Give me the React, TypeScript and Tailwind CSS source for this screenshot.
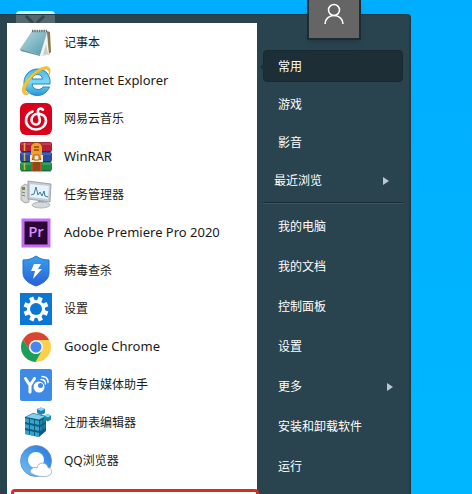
import type { ReactNode } from "react";

const NotepadIcon = () => (
  <svg viewBox="0 0 32 32" className="size-8">
    <defs>
      <linearGradient id="note" x1="0" y1="0" x2="1" y2="1">
        <stop offset="0" stopColor="#b5dbe2" />
        <stop offset="0.5" stopColor="#86bac7" />
        <stop offset="1" stopColor="#4f98aa" />
      </linearGradient>
    </defs>
    <path d="M27 4l3 1 1 20-3 3-4-1z" fill="#8a7650" />
    <path d="M12 4l15-1 1 25-7 1z" fill="#d5dad6" />
    <path d="M12 4l15 1-7 23L0 22z" fill="url(#note)" />
    <path d="M0 22l20 6v1L1 24z" fill="#5d8e9b" />
    <path d="M27 7l2 20-9 2z" fill="#f1f3f0" />
    <path d="M26 17l-3 11 5-1z" fill="#c9cec6" />
    <path d="M12 4h15" stroke="#6a7778" strokeWidth="2.500" strokeDasharray="1.500 .8" />
  </svg>
);

const ExplorerIcon = () => (
  <svg viewBox="0 0 32 32" className="size-8">
    <defs>
      <linearGradient id="ie" x1="0" y1="0" x2="0" y2="1">
        <stop offset="0" stopColor="#4fb4e6" />
        <stop offset="0.5" stopColor="#7bd8f8" />
        <stop offset="1" stopColor="#2497d8" />
      </linearGradient>
    </defs>
    <path
      d="M30 19H12c.3 3.500 3 5.500 6 5.500 2.500 0 4-1 5-2.500h6.500C27.500 27 23 30.500 17.500 30.500 10 30.500 4 25 4 17.500S10 4 17.500 4 31 9.500 30 19zM12 14h10.500c-.5-3-2.500-4.500-5-4.500S12.500 11 12 14z"
      fill="url(#ie)"
      stroke="#2386bf"
      strokeWidth="1"
    />
    <path
      d="M29 10c1.500-4 1.500-7-1-8-4-1.500-12 3-18 9C4 17 1 24 3 28c1 2 4 2 7 0-3 .5-4.500-.5-4.500-3 .2-4 3-9 7.500-13.500C18 6.500 24 3.500 27 4c2 .5 2.500 3 2 6z"
      fill="#f5c62c"
      stroke="#e6b32a"
      strokeWidth=".8"
    />
  </svg>
);

const MusicIcon = () => (
  <svg viewBox="0 0 32 32" className="size-8">
    <rect width="32" height="32" rx="6" fill="#d9001b" />
    <path
      d="M12.500 8.500C8.500 10 6 13.500 6 17.500 6 22.500 10.500 26.500 16 26.500s10-4 10-9c0-4-3.500-6.800-8-6.800-4 0-6.500 3-6.500 6 0 2.800 2 4.800 4.500 4.800s4.200-2 3.800-4.600L18 9c-.6-3 2.500-4.500 5-2.300"
      fill="none"
      stroke="#fff"
      strokeWidth="2.600"
      strokeLinecap="round"
    />
  </svg>
);

const WinRarIcon = () => (
  <svg viewBox="0 0 32 32" className="size-8">
    <rect y="1" width="32" height="10" rx="2" fill="#b01f3a" />
    <rect y="11" width="32" height="10" rx="2" fill="#2b4aa5" />
    <rect y="21" width="32" height="9" rx="2" fill="#1f8a42" />
    <path d="M1 3h30" stroke="#d5566b" />
    <path d="M1 13h30" stroke="#5678cf" />
    <path d="M1 23h30" stroke="#4fb86d" />
    <path d="M1 10.500h30M1 20.500h30M1 30h30" stroke="#1d2236" strokeOpacity=".7" />
    <path d="M4.500 2v8M4.500 12v8M4.500 22v7" stroke="#d9b03a" strokeWidth="1.500" />
    <rect x="11" y="1" width="11" height="29" fill="#96451c" />
    <path d="M12 21v9M21 21v9" stroke="#c66a2a" />
    <path d="M11 13V7c0-3 2-5 5.500-5S22 4 22 7v6l-2 6h-7z" fill="#f0a02c" />
    <path d="M11 14v6h11v-6" fill="none" stroke="#f4ead2" strokeWidth="2" />
    <path d="M14 6h5M14 9h5" stroke="#8b4a17" strokeWidth="1.500" />
    <path d="M14 14h5v5h-5z" fill="#fff1cf" stroke="#a95b16" />
  </svg>
);

const TaskIcon = () => (
  <svg viewBox="0 0 32 32" className="size-8">
    <path d="M1 8l4-3 4 2v16l-4 1-4-3z" fill="#d6d7d3" stroke="#999b98" strokeWidth=".8" />
    <path d="M2 13l3 1M2 16l3 1" stroke="#777b80" />
    <path d="M2 8h3v3H2z" fill="#74864a" />
    <path d="M8 2l23 3-1 18-22-3z" fill="#c7cccf" stroke="#8e969c" strokeWidth=".8" />
    <path d="M10 5l19 2-1 13-18-2z" fill="#e6f3fd" />
    <path d="M11 16l3-1 2-7 2 8 2-3 2 4 2-5 1 5 3 1" fill="none" stroke="#3678a8" />
    <path d="M18 22h6l1 4h-7z" fill="#999fa4" />
    <ellipse cx="21" cy="26" rx="9" ry="3" fill="#d6d9dc" stroke="#a4a9ad" strokeWidth=".8" />
  </svg>
);

const PremiereIcon = () => (
  <svg viewBox="0 0 32 32" className="size-8">
    <rect x="3" y="3" width="26" height="26" fill="#2a0636" stroke="#c46cf0" strokeWidth="3" />
    <text x="16" y="20" textAnchor="middle" fontSize="15" fontWeight="600" fontFamily="Open Sans, sans-serif" fill="#d88cff">
      Pr
    </text>
  </svg>
);

const ShieldIcon = () => (
  <svg viewBox="0 0 32 32" className="size-8">
    <defs>
      <linearGradient id="shield" x1="0" y1="0" x2="0" y2="1">
        <stop offset="0" stopColor="#36a2ef" />
        <stop offset="1" stopColor="#2a5ed9" />
      </linearGradient>
    </defs>
    <path d="M16 1c4 3 8 4 13 4v13c0 7-7 11-13 13C10 29 3 25 3 18V5c5 0 9-1 13-4z" fill="url(#shield)" stroke="#2370cd" />
    <path d="M14 9h7l-3 5h4l-9 10 2-8h-4z" fill="#fff" />
  </svg>
);

const GearIcon = () => (
  <svg viewBox="0 0 32 32" className="size-8">
    <path d="M0 0h32v32H0z" fill="#0a78d4" />
    <g stroke="#fff" strokeWidth="4.500">
      <path d="M16 3.500v25M3.500 16h25" transform="rotate(22 16 16)" />
      <path d="M16 3.500v25M3.500 16h25" transform="rotate(67 16 16)" />
    </g>
    <circle cx="16" cy="16" r="9" fill="#fff" />
    <circle cx="16" cy="16" r="6" fill="#0a78d4" />
  </svg>
);

const ChromeIcon = () => (
  <svg viewBox="0 0 32 32" className="size-8">
    <circle cx="16" cy="16" r="15" fill="#fdd04b" />
    <path d="M3 8.500A15 15 0 0 1 29 9H16a7 7 0 0 0-6 10.500z" fill="#da4437" />
    <path d="M3 8.500A15 15 0 0 0 15.500 31L22 19.500A7 7 0 0 1 10 19.500z" fill="#1aa05d" />
    <circle cx="16" cy="16" r="7" fill="#f6f7fa" />
    <circle cx="16" cy="16" r="5.500" fill="#4688f1" />
  </svg>
);

const YoIcon = () => (
  <svg viewBox="0 0 32 32" className="size-8">
    <rect width="32" height="32" rx="2" fill="#3d8be6" />
    <g fill="none" stroke="#fff" strokeLinecap="round">
      <path d="M5.500 9.500l4.500 7 4.500-7M10 16v7" strokeWidth="3" />
      <path d="M21 10.500c3 0 4.500 1.500 4.500 4.500M22 7.500c4 0 6 2.500 6 6" strokeWidth="1.500" />
    </g>
    <circle cx="19" cy="18" r="5.500" fill="#fff" />
    <circle cx="20.500" cy="16.500" r="2.500" fill="#3d8be6" />
  </svg>
);

const cubes = [
  [5, 11], [10, 12], [15, 13],
  [5, 17], [10, 18], [15, 19],
  [5, 23], [10, 24], [15, 25],
];

const RegistryIcon = () => (
  <svg viewBox="0 0 32 32" className="size-8">
    <path d="M5 10l8-4 13 3v15l-7 6-14-3z" fill="#115a80" />
    {cubes.map(([x, y]) => (
      <path key={`${x}-${y}`} d={`M${x} ${y}l4 1v4l-4-1z`} fill="#35a5cc" />
    ))}
    <path d="M20 14l2.500-1.500v4L20 18zM23.500 12l2-1v4l-2 1zM20 20l2.500-1.500v4L20 24zM23.500 18l2-1v4l-2 1z" fill="#1f84ad" />
    <path d="M6 10l7-3.500 12 3-6 3z" fill="#7fd0e8" />
    <path d="M17 2l4-1.500L25 2v4l-4 2-4-2z" fill="#1c85ae" />
    <path d="M17 2l4-1.500L25 2l-4 2z" fill="#8ed8ec" />
    <path d="M24 8.500l4-1.500 3 1.500v4l-3 2-4-2z" fill="#1c85ae" />
    <path d="M24 8.500l4-1.500 3 1.500-3 2z" fill="#8ed8ec" />
  </svg>
);

const QQIcon = () => (
  <svg viewBox="0 0 32 32" className="size-8">
    <defs>
      <linearGradient id="qq" x1="0" y1="1" x2="1" y2="0">
        <stop offset="0" stopColor="#73c1f7" />
        <stop offset="1" stopColor="#2276dc" />
      </linearGradient>
    </defs>
    <circle cx="16" cy="16" r="15.500" fill="url(#qq)" stroke="#5c8fc0" strokeWidth=".8" />
    <circle cx="16" cy="15" r="8" fill="#fff" />
    <path
      d="M10 27c1-4 4-5.500 7-4 1-6 9-7 11-.5 4 1 4.500 4.500 3 6.500-2 2.500-5 2.500-8 2.500-5 0-9-1-13-4.500z"
      fill="#fff"
      stroke="#8ea6bd"
      strokeWidth=".8"
    />
  </svg>
);

const programs: { name: string; icon: ReactNode; latin?: boolean }[] = [
  { name: "记事本", icon: <NotepadIcon /> },
  { name: "Internet Explorer", icon: <ExplorerIcon />, latin: true },
  { name: "网易云音乐", icon: <MusicIcon /> },
  { name: "WinRAR", icon: <WinRarIcon />, latin: true },
  { name: "任务管理器", icon: <TaskIcon /> },
  { name: "Adobe Premiere Pro 2020", icon: <PremiereIcon />, latin: true },
  { name: "病毒查杀", icon: <ShieldIcon /> },
  { name: "设置", icon: <GearIcon /> },
  { name: "Google Chrome", icon: <ChromeIcon />, latin: true },
  { name: "有专自媒体助手", icon: <YoIcon /> },
  { name: "注册表编辑器", icon: <RegistryIcon /> },
  { name: "QQ浏览器", icon: <QQIcon /> },
];

const places = ["我的电脑", "我的文档", "控制面板", "设置", "更多", "安装和卸载软件", "运行"];

const Arrow = () => (
  <svg viewBox="0 0 6 8" className="h-2 w-1.5">
    <path d="M0 0l6 4-6 4z" fill="#b9c9cf" />
  </svg>
);

const App = () => {
  return (
    <div className="relative h-screen overflow-hidden bg-linear-to-b from-[#00aeff] to-[#00b7ff] pt-3.5 font-['Noto_Sans','Noto_Sans_CJK_SC',sans-serif] text-xs">
      {/* desktop shortcut peeking out behind the menu */}
      <div className="absolute top-[11px] left-4 h-6 w-[39px] rounded-t bg-[#d9eef7]" />
      <div className="relative flex w-[87%] rounded-tr-sm border-t border-r-2 border-[#1f3b47] bg-[#2a444f]">
        <svg viewBox="0 0 39 8" className="absolute top-0 left-4 h-2 w-[39px]">
          <path d="M0 0h39v8H0z" fill="#56676d" />
          <path d="M10 1l7 7M28 1l-7 7" stroke="#34454b" strokeWidth="3" />
        </svg>
        <div className="mt-2 ml-[7px] w-[250px] shrink-0 bg-white pt-px pl-1">
          <ul>
            {programs.map(({ name, icon, latin }) => (
              <li key={name}>
                <button className="flex h-[38px] w-full items-center gap-3 pl-[9px] text-left text-[#1a1a1a]">
                  {icon}
                  <span className={latin ? "text-[13px]" : ""}>{name}</span>
                </button>
              </li>
            ))}
          </ul>
          <div className="mt-[9px] -mr-0.5 h-10 rounded border-3 border-[#d92b20]" />
        </div>

        <nav className="flex flex-1 flex-col pt-[35px] pr-1.5 pl-1.5 text-white">
          <button className="relative h-8 rounded-sm border border-[#172a33] bg-[#1e2e36] pt-0.5 pl-3.5 text-left">
            <span className="absolute top-3 -left-1 border-y-4 border-r-4 border-y-transparent border-r-[#1e2e36]" />
            常用
          </button>
          <button className="mt-1 h-[38px] pl-[15px] text-left">游戏</button>
          <button className="h-[38px] pl-[15px] text-left">影音</button>
          <button className="flex h-[38px] items-center justify-between pr-3.5 pl-[11px]">
            最近浏览
            <Arrow />
          </button>
          <hr className="mt-0.5 mb-1 border-t border-[#162d38] shadow-[0_1px_0_#3b5662]" />
          {places.map((name) => (
            <button key={name} className="flex h-10 items-center justify-between pr-2.5 pl-[15px]">
              {name}
              {name === "更多" && <Arrow />}
            </button>
          ))}
        </nav>
      </div>

      <div className="absolute top-0 left-[65%] flex h-10 w-[54px] justify-center border-x-2 border-b-2 border-[#1d2c33] bg-[#656565] shadow-md">
        <svg viewBox="0 0 20 24" className="mt-0.5 h-6 w-5" fill="none" stroke="#fff" strokeWidth="1.500">
          <circle cx="10" cy="8" r="5.500" />
          <path d="M1 22c0-5 4-8.500 9-8.500s9 3.500 9 8.500" />
        </svg>
      </div>
    </div>
  );
};

export default App;
